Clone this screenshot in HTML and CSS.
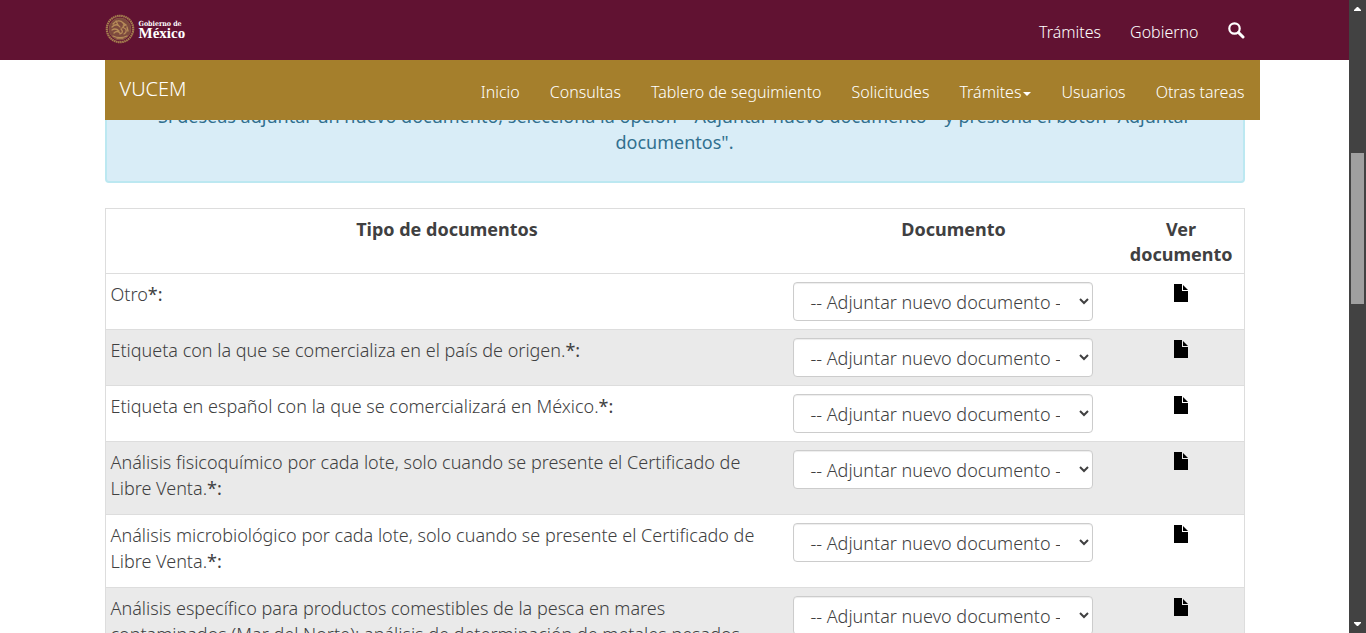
FILE: index.html
```html
<!DOCTYPE html>
<html lang="es">
<head>
<meta charset="utf-8">
<meta name="viewport" content="width=device-width, initial-scale=1">
<title>VUCEM</title>
<link rel="stylesheet" href="styles.css">
</head>
<body>
<svg class="sprite" aria-hidden="true">
  <symbol id="file" viewBox="0 0 14 18"><path d="M0 0h8v7h6v11H0z"/><path d="M9 1l5 5H9z"/></symbol>
</svg>
<div class="page">
  <header class="gov">
    <div class="container gov-inner">
      <a class="brand" href="#" aria-label="Gobierno de México">
        <svg class="seal" viewBox="0 0 30 30" aria-hidden="true">
          <circle cx="15" cy="15" r="13.2" fill="none" stroke="#a57f4f" stroke-width="2.2" stroke-dasharray="1.6 .5"/>
          <circle cx="15" cy="15" r="11" fill="#7d4a3e" stroke="#8a5a45" stroke-width=".8"/>
          <g fill="none" stroke="#b78c59" stroke-width="1.3" stroke-linecap="round">
            <path d="M8 10c3-4 8-4 10-1 2 2 1 4-1 5M7 13c3-3 6-3 8 0M7 16c3-2 5-1 7 1M9 19c2-2 4-2 6 0M17 8l4 3-3 1M19 14c3 1 3 4 0 6M16 15c2 2 2 4-1 5M8 22c4 2 10 2 14 0M12 24h6M22 13l1 4M11 7l2 4"/>
          </g>
        </svg>
        <span class="brand-text"><span class="brand-top">Gobierno de</span><span class="brand-name">México</span></span>
      </a>
      <nav class="gov-links" aria-label="Gobierno">
        <a href="#">Trámites</a>
        <a href="#">Gobierno</a>
        <a href="#" aria-label="Buscar"><svg class="search" viewBox="0 0 17 17" aria-hidden="true"><circle cx="6.5" cy="6.5" r="5.2" fill="none" stroke="#fff" stroke-width="2.2"/><path d="M10.5 10.5l4.5 4.5" stroke="#fff" stroke-width="3" stroke-linecap="round"/></svg></a>
      </nav>
    </div>
  </header>
  <div class="container">
    <nav class="sub" aria-label="VUCEM">
      <a class="sub-brand" href="#">VUCEM</a>
      <div class="sub-links">
        <a href="#">Inicio</a>
        <a href="#">Consultas</a>
        <a href="#">Tablero de seguimiento</a>
        <a href="#">Solicitudes</a>
        <a href="#">Trámites<span class="caret"></span></a>
        <a href="#">Usuarios</a>
        <a href="#">Otras tareas</a>
      </div>
    </nav>
  </div>
  <main class="content">
    <div class="container">
      <div class="alert"><p>Si deseas adjuntar un nuevo documento, selecciona la opción "-Adjuntar nuevo documento-" y presiona el botón "Adjuntar documentos".</p></div>
      <table class="docs">
        <thead>
          <tr><th class="col-type">Tipo de documentos</th><th class="col-doc">Documento</th><th class="col-view">Ver documento</th></tr>
        </thead>
        <tbody>
          <tr>
            <td class="type"><label for="d1">Otro<b>*:</b></label></td>
            <td><select id="d1"><option>-- Adjuntar nuevo documento --</option></select></td>
            <td class="view"><a href="#" aria-label="Ver documento"><svg class="file"><use href="#file"/></svg></a></td>
          </tr>
          <tr>
            <td class="type"><label for="d2">Etiqueta con la que se comercializa en el país de origen.<b>*:</b></label></td>
            <td><select id="d2"><option>-- Adjuntar nuevo documento --</option></select></td>
            <td class="view"><a href="#" aria-label="Ver documento"><svg class="file"><use href="#file"/></svg></a></td>
          </tr>
          <tr>
            <td class="type"><label for="d3">Etiqueta en español con la que se comercializará en México.<b>*:</b></label></td>
            <td><select id="d3"><option>-- Adjuntar nuevo documento --</option></select></td>
            <td class="view"><a href="#" aria-label="Ver documento"><svg class="file"><use href="#file"/></svg></a></td>
          </tr>
          <tr>
            <td class="type"><label for="d4">Análisis fisicoquímico por cada lote, solo cuando se presente el Certificado de Libre Venta.<b>*:</b></label></td>
            <td><select id="d4"><option>-- Adjuntar nuevo documento --</option></select></td>
            <td class="view"><a href="#" aria-label="Ver documento"><svg class="file"><use href="#file"/></svg></a></td>
          </tr>
          <tr>
            <td class="type"><label for="d5">Análisis microbiológico por cada lote, solo cuando se presente el Certificado de Libre Venta.<b>*:</b></label></td>
            <td><select id="d5"><option>-- Adjuntar nuevo documento --</option></select></td>
            <td class="view"><a href="#" aria-label="Ver documento"><svg class="file"><use href="#file"/></svg></a></td>
          </tr>
          <tr>
            <td class="type"><label for="d6">Análisis específico para productos comestibles de la pesca en mares contaminados (Mar del Norte): análisis de determinación de metales pesados</label></td>
            <td><select id="d6"><option>-- Adjuntar nuevo documento --</option></select></td>
            <td class="view"><a href="#" aria-label="Ver documento"><svg class="file"><use href="#file"/></svg></a></td>
          </tr>
        </tbody>
      </table>
    </div>
  </main>
</div>
<div class="scrollbar" aria-hidden="true">
  <svg class="arrow" viewBox="0 0 7 4"><path d="M3 0h1l3 3v1H0V3z"/></svg>
  <div class="track"><div class="thumb"></div></div>
  <svg class="arrow" viewBox="0 0 7 4"><path d="M0 0h7v1L4 4H3L0 1z"/></svg>
</div>
</body>
</html>
```
FILE: styles.css
```css
* { box-sizing: border-box; }

body {
  margin: 0;
  display: flex;
  height: 100vh;
  overflow: hidden;
  background: #fff;
  color: #404041;
  font: 300 18px/26px "Noto Sans", "Open Sans", sans-serif;
}

a { color: inherit; text-decoration: none; }

.sprite { display: none; }

.page {
  flex: 1;
  min-width: 0;
  display: flex;
  flex-direction: column;
}

.container {
  width: 100%;
  max-width: 1170px;
  margin: 0 auto;
  padding: 0 15px;
}

.gov { background: #611232; color: #fff; }

.gov-inner {
  display: flex;
  justify-content: space-between;
  align-items: center;
  height: 60px;
}

.brand { display: flex; align-items: center; gap: 4px; padding-bottom: 2px; }
.seal { width: 30px; height: 30px; }
.brand-text { display: flex; flex-direction: column; }
.brand-top { font: 700 7px/9px "DejaVu Serif Condensed", "DejaVu Serif", serif; }
.brand-name { font: 700 15px/11px "Liberation Serif", serif; }

.gov-links {
  display: flex;
  align-items: center;
  gap: 29px;
  padding-top: 4px;
  font-size: 16px;
}
.search { display: block; width: 17px; height: 17px; margin-bottom: 3px; }

.sub {
  display: flex;
  justify-content: space-between;
  height: 60px;
  margin-right: -15px;
  padding: 0 15px;
  background: #a57f2c;
  color: #fff;
}
.sub-brand { font-size: 20px; line-height: 58px; }
.sub-links {
  display: flex;
  gap: 30px;
  font-size: 16px;
  line-height: 64px;
}
.caret {
  display: inline-block;
  margin-left: 2px;
  border: 4px solid transparent;
  border-top-color: #fff;
  border-bottom: 0;
  vertical-align: middle;
}

.content { flex: 1; min-height: 0; overflow: hidden; }

.alert {
  margin: -19px 0 25px;
  padding: 0 50px 16px;
  border: 2px solid #bce8f1;
  border-radius: 4px;
  background: #d9edf7;
  color: #31708f;
  font-weight: 400;
  text-align: center;
}
.alert p { margin: 0 0 10px; }

.docs {
  width: 100%;
  table-layout: fixed;
  border-collapse: collapse;
  border: 1px solid #ddd;
}
.col-type { width: 60%; }
.col-doc { width: 29%; }
.col-view { width: 11%; }

.docs th {
  padding: 8px 5px 6px;
  font-weight: 700;
  line-height: 25px;
  text-align: center;
  vertical-align: top;
}
.docs td {
  padding: 8px 5px;
  border-top: 1px solid #ddd;
  vertical-align: top;
}
.docs .type { padding-top: 7px; }
.docs tbody tr:nth-child(even) { background: #eaeaea; }
.docs label { display: block; margin-bottom: 5px; }
.docs b { font-weight: 400; }

select {
  display: block;
  width: 300px;
  height: 39px;
  padding: 6px 16px 6px 12px;
  border: 1px solid #ccc;
  border-radius: 4px;
  background: #fff;
  box-shadow: inset 0 1px 1px rgba(0, 0, 0, .075);
  color: #404041;
  font: inherit;
}

.view { text-align: center; }
.file { display: block; width: 14px; height: 18px; margin: 2px auto 0; fill: #000; }

.scrollbar {
  display: flex;
  flex-direction: column;
  align-items: center;
  width: 17px;
  padding: 7px 0;
  background: #424242;
}
.arrow { width: 7px; height: 4px; fill: #fff; }
.track { flex: 1; width: 13px; padding-top: 142px; }
.thumb { height: 151px; background: #a0a0a0; }
```
